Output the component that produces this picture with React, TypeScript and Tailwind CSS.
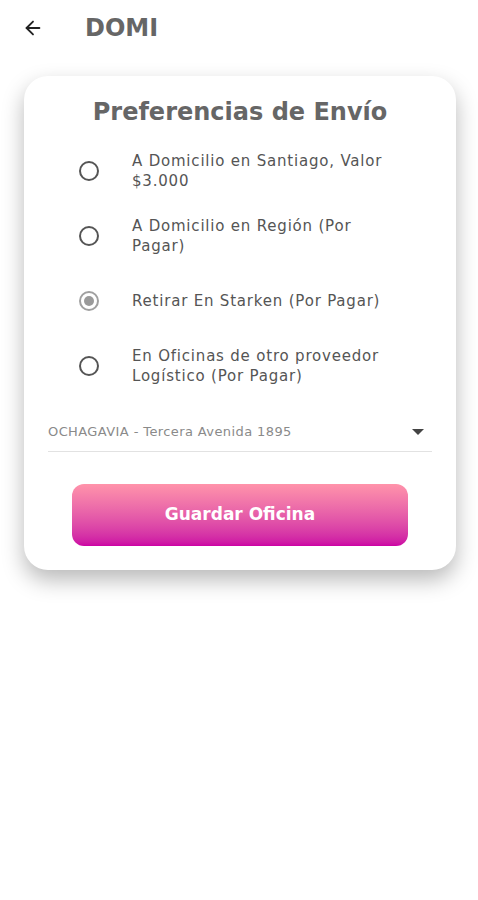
import { ArrowLeft } from "lucide-react";

const options = [
  { label: "A Domicilio en Santiago, Valor $3.000", checked: false },
  { label: "A Domicilio en Región (Por Pagar)", checked: false },
  { label: "Retirar En Starken (Por Pagar)", checked: true },
  { label: "En Oficinas de otro proveedor Logístico (Por Pagar)", checked: false },
];

function Radio({ checked }: { checked: boolean }) {
  if (checked) {
    return (
      <span className="flex h-[20px] w-[20px] shrink-0 items-center justify-center rounded-full border-2 border-[#a0a0a0]">
        <span className="h-[10px] w-[10px] rounded-full bg-[#9a9a9a]"></span>
      </span>
    );
  }
  return (
    <span className="block h-[20px] w-[20px] shrink-0 rounded-full border-2 border-[#555]"></span>
  );
}

export default function App() {
  return (
    <main className="min-h-[900px] w-full bg-white font-['DejaVu_Sans',sans-serif]">
      <header className="flex h-[56px] items-center px-[22px]">
        <ArrowLeft size={22} strokeWidth={2} className="text-[#222]" />
        <h1 className="ml-[41px] text-[24px] font-bold text-[#666]">DOMI</h1>
      </header>

      <section className="ml-[24px] mr-[22px] mt-[20px] rounded-[24px] bg-white pb-[24px] pt-[21px] shadow-[0_10px_22px_rgba(0,0,0,0.28)]">
        <h2 className="text-center text-[24px] font-bold leading-[30px] text-[#666]">
          Preferencias de Envío
        </h2>

        <ul className="mt-[24px] flex flex-col gap-[25px] pl-[55px] pr-[58px]">
          {options.map((opt) => (
            <li key={opt.label} className="flex min-h-[40px] items-center">
              <Radio checked={opt.checked} />
              <span className="ml-[33px] text-[15px] leading-[20px] tracking-[0.8px] text-[#555]">
                {opt.label}
              </span>
            </li>
          ))}
        </ul>

        <div className="mx-[24px] mt-[26px] flex items-center justify-between border-b border-[#e2e2e2] pb-[9px] pt-[10px]">
          <span className="text-[13px] tracking-[0.4px] text-[#8a8a8a]">
            OCHAGAVIA - Tercera Avenida 1895
          </span>
          <span className="mr-[8px] h-0 w-0 border-x-[6px] border-t-[6px] border-x-transparent border-t-[#444]"></span>
        </div>

        <div className="mt-[32px] flex justify-center">
          <button className="h-[62px] w-[336px] rounded-[12px] bg-gradient-to-b from-[#ff93aa] to-[#cc00a4] text-[17px] font-bold text-white">
            Guardar Oficina
          </button>
        </div>
      </section>
    </main>
  );
}
